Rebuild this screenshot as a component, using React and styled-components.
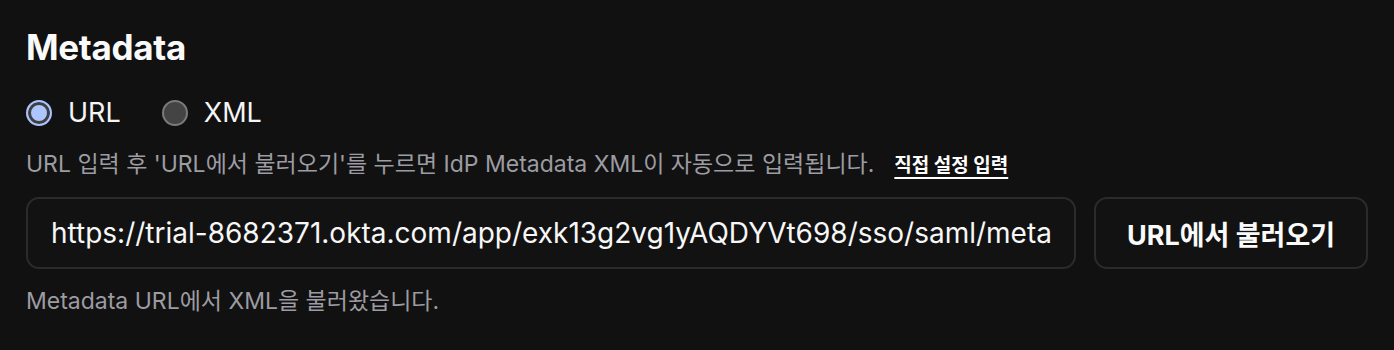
import React, { useState } from "react";
import styled, { createGlobalStyle } from "styled-components";

const Global = createGlobalStyle`
  html, body { margin: 0; padding: 0; background: #111111; }
  body { font-family: Inter, "Noto Sans CJK KR", sans-serif; color: #fff; }
`;

const Section = styled.section`
  display: flex;
  flex-direction: column;
  padding: 26px 26px 0 26px;
  width: 1342px;
`;

const Title = styled.h2`
  margin: 0;
  font-size: 35px;
  font-weight: 700;
  line-height: 42px;
  letter-spacing: -0.3px;
  color: #fafafa;
`;

const RadioGroup = styled.div`
  display: flex;
  align-items: center;
  gap: 41px;
  margin-top: 29px;
  height: 32px;
`;

const RadioLabel = styled.label`
  display: flex;
  align-items: center;
  gap: 16px;
  font-size: 27px;
  line-height: 32px;
  color: #f5f5f5;
  cursor: pointer;
`;

const RadioDot = styled.span`
  box-sizing: border-box;
  width: 26px;
  height: 26px;
  border-radius: 50%;
  border: 2px solid ${(p) => (p.$checked ? "#a9c3ff" : "#7a7a7a")};
  background: ${(p) => (p.$checked ? "#aec6ff" : "#444444")};
  box-shadow: ${(p) => (p.$checked ? "inset 0 0 0 3px #3f3f3f" : "none")};
`;

const Help = styled.p`
  margin: 20px 0 0 0;
  display: flex;
  align-items: baseline;
  font-size: 23px;
  line-height: 30px;
  color: #9c9ca2;
`;

const Link = styled.a`
  margin-left: 20px;
  font-size: 19px;
  font-weight: 700;
  color: #ffffff;
  text-decoration: underline;
  text-underline-offset: 5px;
  text-decoration-thickness: 2px;
  cursor: pointer;
`;

const Row = styled.div`
  display: flex;
  gap: 18px;
  margin-top: 16px;
`;

const Input = styled.input`
  box-sizing: border-box;
  flex: 1;
  min-width: 0;
  height: 72px;
  border-radius: 13px;
  border: 2px solid #2b2b2b;
  background: #121212;
  color: #f7f7f7;
  font-family: Inter, "Noto Sans CJK KR", sans-serif;
  font-size: 28px;
  padding: 0 23px;
  outline: none;
`;

const Button = styled.button`
  box-sizing: border-box;
  width: 274px;
  height: 72px;
  border-radius: 13px;
  border: 2px solid #2b2b2b;
  background: #121212;
  color: #fafafa;
  font-family: Inter, "Noto Sans CJK KR", sans-serif;
  font-size: 27px;
  font-weight: 700;
  cursor: pointer;
`;

const Status = styled.p`
  margin: 17px 0 0 0;
  font-size: 23px;
  line-height: 30px;
  color: #9c9ca2;
`;

export default function App() {
  const [mode, setMode] = useState("url");
  return (
    <>
      <Global />
      <Section>
        <Title>Metadata</Title>
        <RadioGroup>
          <RadioLabel onClick={() => setMode("url")}>
            <RadioDot $checked={mode === "url"} />
            URL
          </RadioLabel>
          <RadioLabel onClick={() => setMode("xml")}>
            <RadioDot $checked={mode === "xml"} />
            XML
          </RadioLabel>
        </RadioGroup>
        <Help>
          URL 입력 후 'URL에서 불러오기'를 누르면 IdP Metadata XML이 자동으로 입력됩니다.
          <Link>직접 설정 입력</Link>
        </Help>
        <Row>
          <Input defaultValue="https://trial-8682371.okta.com/app/exk13g2vg1yAQDYVt698/sso/saml/metadata" />
          <Button>URL에서 불러오기</Button>
        </Row>
        <Status>Metadata URL에서 XML을 불러왔습니다.</Status>
      </Section>
    </>
  );
}
